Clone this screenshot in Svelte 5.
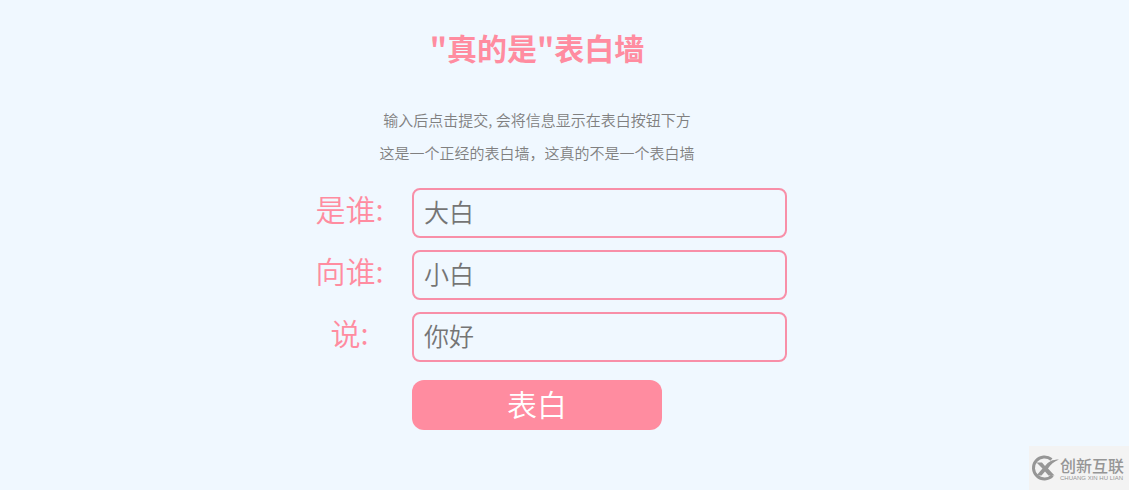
<script>
  const fields = [
    { id: "from", label: "是谁:", hint: "大白" },
    { id: "to", label: "向谁:", hint: "小白" },
    { id: "message", label: "说:", hint: "你好" },
  ];

  let values = $state({ from: "", to: "", message: "" });
  let posts = $state([]);

  function submit(e) {
    e.preventDefault();
    const { from, to, message } = values;
    if (!from || !to || !message) {
      return;
    }
    posts.push(`${from} 对 ${to} 说: ${message}`);
    values = { from: "", to: "", message: "" };
  }
</script>

<main>
  <div class="wall">
    <h1>"真的是"表白墙</h1>
    <p>输入后点击提交, 会将信息显示在表白按钮下方</p>
    <p>这是一个正经的表白墙，这真的不是一个表白墙</p>

    <form onsubmit={submit}>
      {#each fields as field}
        <label for={field.id}>{field.label}</label>
        <input id={field.id} type="text" autocomplete="off" placeholder={field.hint} bind:value={values[field.id]}>
      {/each}
      <button type="submit">表白</button>
    </form>

    {#each posts as post}
      <p>{post}</p>
    {/each}
  </div>
</main>

<div class="brand">
  <svg viewBox="0 0 28 26" aria-hidden="true">
    <path d="M20.500 4.500A11 11 0 1 0 21.500 20.500" fill="none" stroke="#969696" stroke-width="3" />
    <path d="M5.500 7.500h5.500l3 3.500C17.500 6.500 21.500 4.500 28 4.500c-5 2-8.500 5-11 9l6.500 7h-6L14 16.500l-3.500 4H5.500l6-7z" fill="#969696" />
  </svg>
  <div class="name">
    <span class="zh">创新互联</span>
    <span class="en">CHUANG XIN HU LIAN</span>
  </div>
</div>

<style>
  :global(body) {
    background: #f0f8ff;
    font-family: "Noto Sans CJK SC", sans-serif;
  }

  main {
    display: flex;
    justify-content: center;
    padding: 26px 55px 60px 0;
  }

  .wall {
    width: 500px;
    max-width: 100%;
    text-align: center;
  }

  h1 {
    margin: 0 0 35px;
    font-size: 30px;
    line-height: 42px;
    color: #ff8ca0;
  }

  p {
    margin: 0;
    font-size: 15px;
    line-height: 33px;
    font-weight: 350;
    color: gray;
  }

  form {
    display: grid;
    grid-template-columns: 1fr 3fr;
    row-gap: 12px;
    margin-top: 19px;
  }

  label {
    font-size: 30px;
    line-height: 40px;
    font-weight: 350;
    color: #ff8ca0;
  }

  input {
    box-sizing: border-box;
    width: 100%;
    height: 50px;
    padding: 0 10px 4px;
    border: 2px solid #f88fa8;
    border-radius: 8px;
    background: none;
    font-family: inherit;
    font-size: 25px;
    font-weight: 350;
    outline: none;
  }

  input::placeholder {
    color: #757575;
  }

  button {
    grid-column: 2;
    width: 250px;
    height: 50px;
    margin-top: 6px;
    padding: 0 0 4px;
    border: none;
    border-radius: 12px;
    background: #ff8ca0;
    font-family: inherit;
    font-size: 30px;
    font-weight: 350;
    line-height: 46px;
    color: white;
    cursor: pointer;
  }

  .brand {
    position: fixed;
    right: 0;
    bottom: 0;
    display: flex;
    align-items: center;
    gap: 1px;
    box-sizing: border-box;
    width: 100px;
    height: 44px;
    padding-left: 2px;
    background: #f3f3f3;
    color: #969696;
  }

  .brand svg {
    flex: none;
    width: 28px;
    height: 26px;
  }

  .name {
    display: flex;
    flex-direction: column;
    white-space: nowrap;
  }

  .zh {
    font-size: 16px;
    line-height: 20px;
    font-weight: 500;
  }

  .en {
    font-family: "Liberation Sans", sans-serif;
    font-size: 6px;
    line-height: 6px;
  }
</style>
